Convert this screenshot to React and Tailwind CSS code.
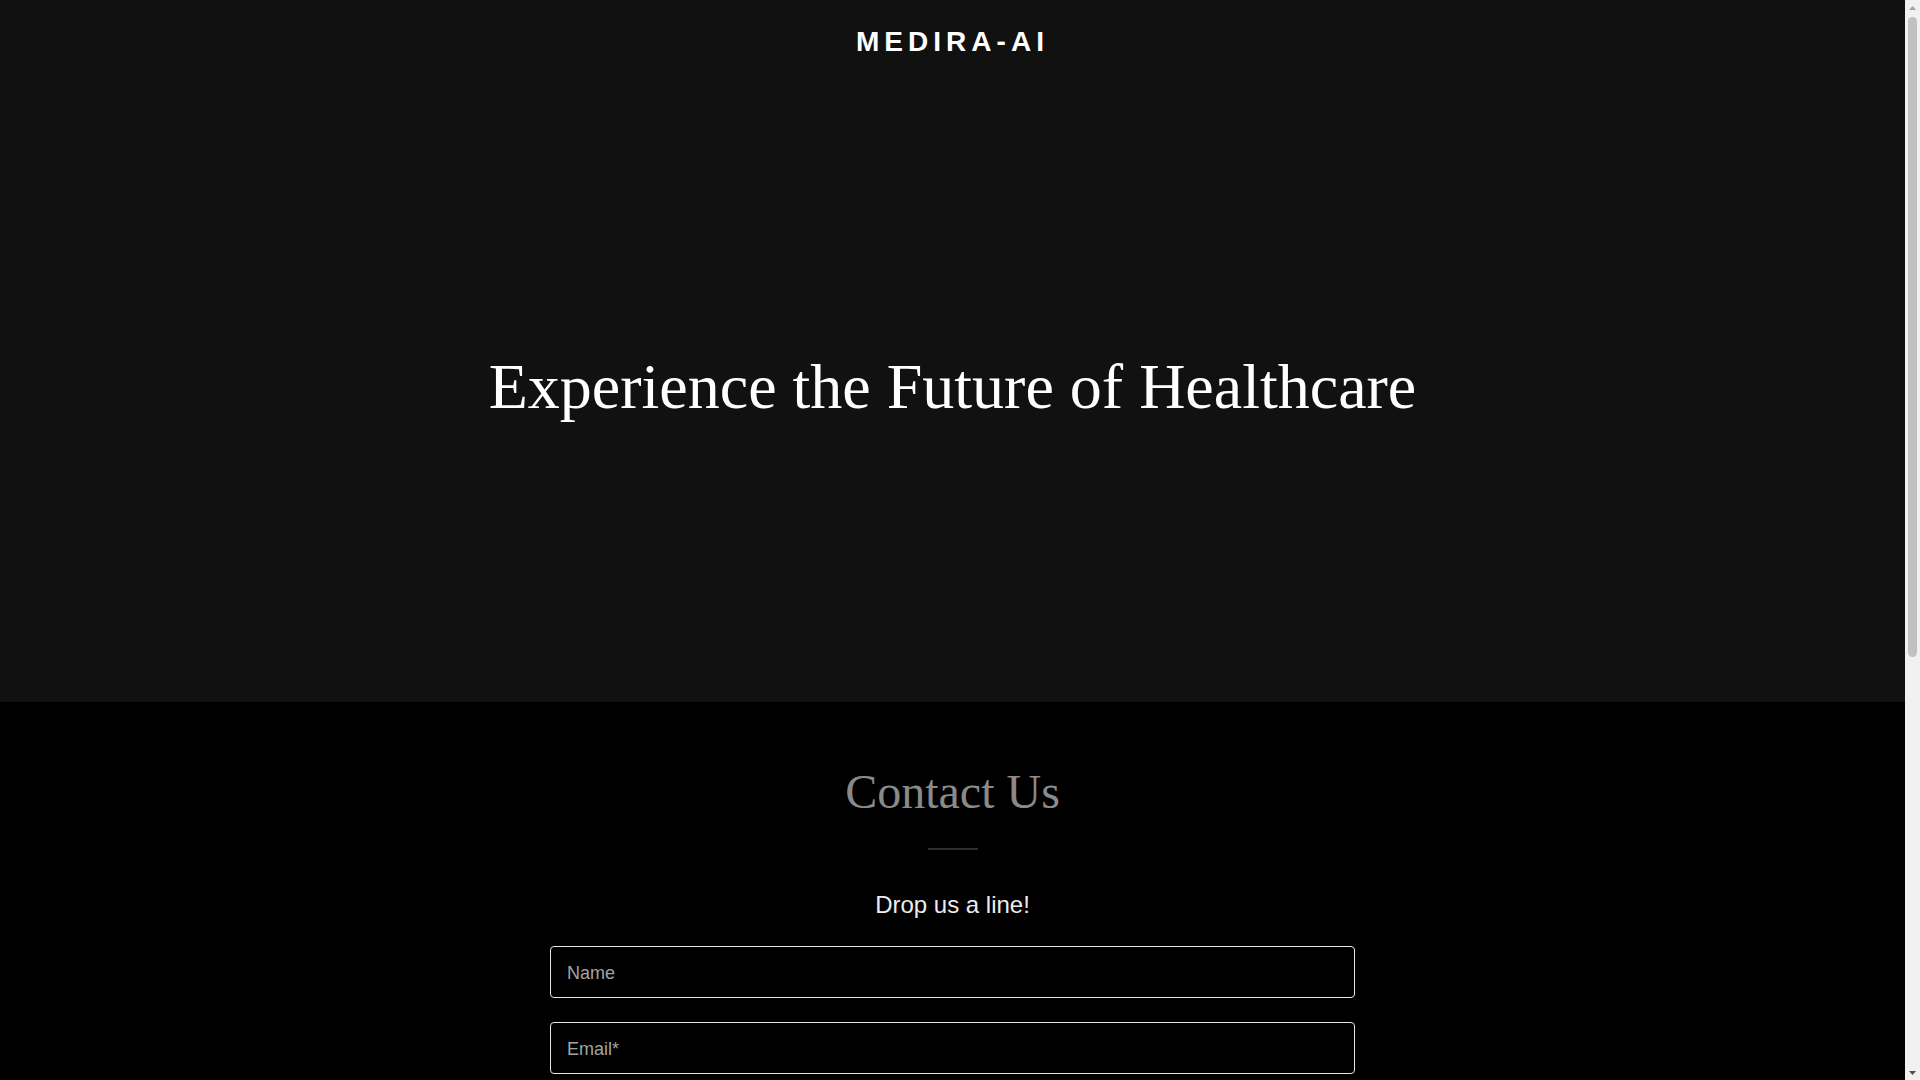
export default function App() {
  const sans = { fontFamily: '"Liberation Sans", Arial, sans-serif' };
  const serif = { fontFamily: '"Liberation Serif", "Times New Roman", serif' };

  return (
    <div className="flex items-start bg-black" style={sans}>
      <main className="flex-1 min-w-0">
        {/* Hero */}
        <section className="h-[702px] bg-[#111111] flex flex-col items-center">
          <header className="pt-6">
            <h1 className="text-[28px] leading-[35px] font-bold tracking-[0.18em] text-white uppercase">
              Medira-AI
            </h1>
          </header>
          <h2
            className="mt-[288px] text-[64px] leading-[80px] text-white text-center"
            style={serif}
          >
            Experience the Future of Healthcare
          </h2>
        </section>

        {/* Contact */}
        <section className="bg-black pt-[60px] pb-24 flex flex-col items-center">
          <h2 className="text-[48px] leading-[60px] text-[#8a8a8a]" style={serif}>
            Contact Us
          </h2>
          <div className="mt-[26px] w-[50px] h-[2px] bg-[#2e2e2e]" />
          <p className="mt-[37px] text-[24px] leading-[36px] text-[#ececec]">Drop us a line!</p>

          <form className="mt-[23px] w-[805px] flex flex-col gap-6">
            <input
              type="text"
              placeholder="Name"
              className="h-[52px] w-full rounded border border-[#e6e6e6] bg-black px-4 pt-[2px] text-[18px] text-white placeholder:text-[#a3a3a3] outline-none"
            />
            <input
              type="email"
              placeholder="Email*"
              className="h-[52px] w-full rounded border border-[#e6e6e6] bg-black px-4 pt-[2px] text-[18px] text-white placeholder:text-[#a3a3a3] outline-none"
            />
            <textarea
              placeholder="Message"
              rows={4}
              className="w-full rounded border border-[#e6e6e6] bg-black px-4 py-3 text-[18px] text-white placeholder:text-[#a3a3a3] outline-none resize-none"
            />
            <button
              type="button"
              className="h-[52px] w-full rounded bg-white text-black text-[16px] font-bold tracking-[0.1em] uppercase"
            >
              Send
            </button>
          </form>
        </section>
      </main>

      {/* browser scrollbar as seen in the capture */}
      <aside className="sticky top-0 w-[15px] h-screen shrink-0 bg-[#f1f1f1] flex flex-col items-center">
        <div className="h-[15px] flex items-center justify-center">
          <svg width="7" height="4" viewBox="0 0 7 4"><path d="M0 4 3.5 0 7 4z" fill="#a3a3a3" /></svg>
        </div>
        <div className="w-[9px] h-[640px] rounded-full bg-[#c1c1c1] mt-[2px]" />
        <div className="flex-1" />
        <div className="h-[15px] flex items-center justify-center">
          <svg width="7" height="4" viewBox="0 0 7 4"><path d="M0 0 3.5 4 7 0z" fill="#505050" /></svg>
        </div>
      </aside>
    </div>
  );
}
